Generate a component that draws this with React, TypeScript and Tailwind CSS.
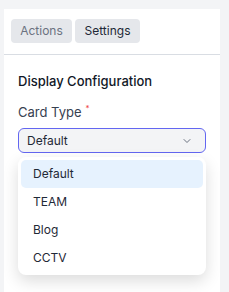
import { ChevronDown } from "lucide-react";

const options = ["Default", "TEAM", "Blog", "CCTV"];

export default function App() {
  return (
    <div
      className="flex h-[292px] w-[229px] bg-[#f3f4f6] pl-[4px] pr-[9px] pt-[9px]"
      style={{ fontFamily: "Inter, 'Noto Sans', sans-serif" }}
    >
      <div className="flex-1 bg-white">
        <div className="flex gap-[3px] border-b border-[#d9dde3] px-[7px] pb-[11px] pt-[10px]">
          <button className="h-[24px] w-[61px] rounded-[4px] bg-[#e5e7eb] text-[12px] text-[#6b7280]">
            Actions
          </button>
          <button className="h-[24px] w-[65px] rounded-[4px] bg-[#e5e7eb] text-[12px] text-[#1f2937]">
            Settings
          </button>
        </div>

        <div className="px-[14px] pt-[16px]">
          <h3 className="text-[13px] font-medium leading-[20px] text-[#111827]">
            Display Configuration
          </h3>

          <div className="mt-[11px]">
            <label className="flex text-[13px] leading-[20px] text-[#374151]">
              Card Type
              <span className="ml-[4px] text-[8px] leading-[12px] text-[#ef4444]">*</span>
            </label>

            <div className="relative mt-[6px]">
              <button className="flex h-[25px] w-full items-center justify-between rounded-[6px] border border-[#6366f1] bg-[#f3f4f6] pl-[8px] pr-[12px] text-[12px] text-[#1f2937]">
                Default
                <ChevronDown className="h-[12px] w-[12px] text-[#6b7280]" strokeWidth={2} />
              </button>

              <div className="absolute left-0 right-0 top-[29px] z-10 rounded-[8px] bg-white p-[3px] shadow-[0_6px_16px_rgba(0,0,0,0.14)]">
                {options.map((o, i) => (
                  <div
                    key={o}
                    className={
                      i === 0
                        ? "flex h-[28px] items-center rounded-[5px] bg-[#e6f2fe] pl-[12px] text-[12px] text-[#1f2937]"
                        : "flex h-[28px] items-center rounded-[5px] pl-[12px] text-[12px] text-[#1f2937]"
                    }
                  >
                    {o}
                  </div>
                ))}
              </div>
            </div>
          </div>

          <div className="mt-[36px] h-[28px] rounded-[6px] border border-[#d1d5db]" />
          <div className="mt-[14px] h-[28px] rounded-[6px] border border-[#d1d5db]" />
        </div>
      </div>
    </div>
  );
}
